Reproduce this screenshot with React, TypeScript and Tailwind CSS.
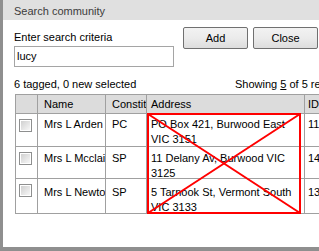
import React from 'react';

const font = { fontFamily: '"Liberation Sans", Arial, sans-serif' };

type Row = { name: string; constit: string; address: string; id: string; h: string; pt: string };

const rows: Row[] = [
  { name: 'Mrs L Arden', constit: 'PC', address: 'PO Box 421, Burwood East VIC 3151', id: '11', h: 'h-[33px]', pt: 'pt-[3px]' },
  { name: 'Mrs L Mcclain', constit: 'SP', address: '11 Delany Av, Burwood VIC 3125', id: '14', h: 'h-[32px]', pt: 'pt-[4px]' },
  { name: 'Mrs L Newton', constit: 'SP', address: '5 Tarnook St, Vermont South VIC 3133', id: '13', h: 'h-[35px]', pt: 'pt-[6px]' },
];

function Checkbox() {
  return (
    <div className="w-[13px] h-[13px] border border-[#8e8f8f] bg-white p-[1px]">
      <div className="w-full h-full bg-gradient-to-br from-[#d0d0d0] to-[#f7f7f7]" />
    </div>
  );
}

function Btn({ label }: { label: string }) {
  return (
    <button className="w-[65px] h-[22px] rounded-[2px] border border-[#707070] bg-gradient-to-b from-[#f2f2f2] via-[#ebebeb] to-[#dddddd] text-[11px] leading-[15px] text-black">
      {label}
    </button>
  );
}

export default function App() {
  return (
    <div className="w-[319px] h-[251px] overflow-hidden bg-[#8f8f8f] pl-[3px]" style={font}>
      <div className="w-[420px] h-[247px] bg-white flex flex-col">
        <div className="h-[20px] bg-[#e0e0e0] pl-[11px] pt-[4px] text-[11px] leading-[15px] text-[#3c3c3c]">
          Search community
        </div>

        <div className="flex pl-[11px] text-[11px] leading-[15px] text-black">
          <div className="w-[160px] pt-[10px]">
            <div>Enter search criteria</div>
            <div className="mt-[1px] h-[21px] border border-[#a5a5a5] pl-[2px] pt-[2px]">lucy</div>
          </div>
          <div className="flex gap-[5px] ml-[9px] mt-[7px]">
            <Btn label="Add" />
            <Btn label="Close" />
          </div>
        </div>

        <div className="flex pl-[11px] mt-[10px] text-[11px] leading-[15px] text-black whitespace-nowrap">
          <div className="w-[221px]">6 tagged, 0 new selected</div>
          <div>
            Showing <span className="underline">5</span> of 5 records
          </div>
        </div>

        <div className="ml-[12px] mt-[2px] w-[330px] text-[11px] leading-[15px] text-black">
          <div className="flex h-[19px] border-t border-[#a0a0a0] bg-[#dcdcdc]">
            <div className="w-[22px] border-l border-[#a0a0a0]" />
            <div className="w-[68px] border-l border-[#a0a0a0] pl-[6px] pt-[2px] overflow-hidden whitespace-nowrap">Name</div>
            <div className="w-[41px] border-l border-[#a0a0a0] pl-[6px] pt-[2px] overflow-hidden whitespace-nowrap">Constituency</div>
            <div className="w-[158px] border-l border-[#a0a0a0] pl-[4px] pt-[2px]">Address</div>
            <div className="w-[41px] border-l border-[#a0a0a0] pl-[3px] pt-[2px]">ID</div>
          </div>

          <div className="relative border-b border-[#a0a0a0]">
            {rows.map((r) => (
              <div key={r.id} className={`flex border-t border-[#a0a0a0] ${r.h}`}>
                <div className="w-[22px] border-l border-[#a0a0a0] pl-[3px] pt-[5px]">
                  <Checkbox />
                </div>
                <div className={`w-[68px] border-l border-[#a0a0a0] pl-[6px] overflow-hidden whitespace-nowrap ${r.pt}`}>{r.name}</div>
                <div className={`w-[41px] border-l border-[#a0a0a0] pl-[6px] ${r.pt}`}>{r.constit}</div>
                <div className={`w-[158px] border-l border-[#a0a0a0] pl-[4px] pr-[3px] ${r.pt}`}>{r.address}</div>
                <div className={`w-[41px] border-l border-[#a0a0a0] pl-[3px] ${r.pt}`}>{r.id}</div>
              </div>
            ))}
            <svg className="absolute left-[132px] top-0 w-[154px] h-[101px] pointer-events-none" viewBox="0 0 154 101">
              <rect x="1" y="1" width="152" height="99" fill="none" stroke="#ff0000" strokeWidth="2" />
              <line x1="1" y1="1" x2="153" y2="100" stroke="#ff0000" strokeWidth="2" />
              <line x1="153" y1="1" x2="1" y2="100" stroke="#ff0000" strokeWidth="2" />
            </svg>
          </div>
        </div>
      </div>
    </div>
  );
}
